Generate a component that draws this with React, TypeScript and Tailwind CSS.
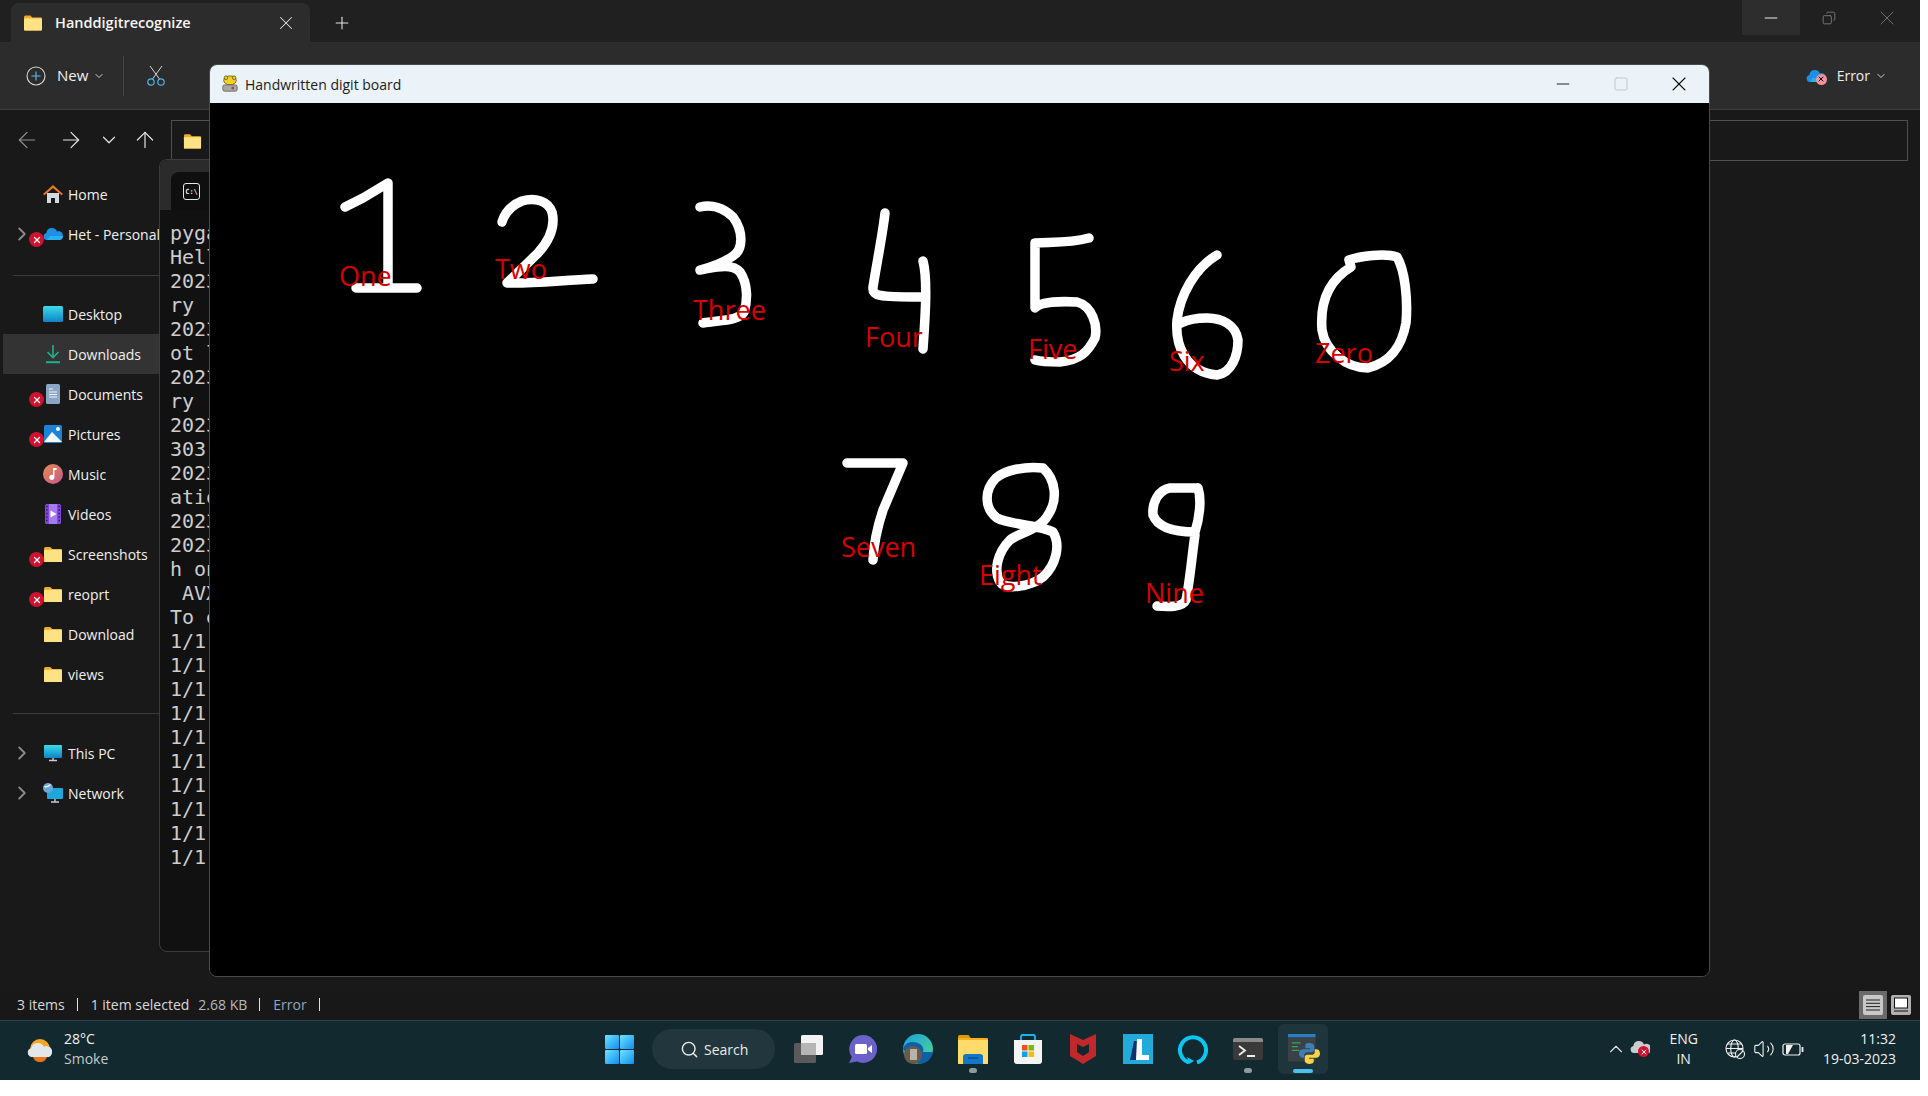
import type { ReactNode } from 'react';
import {
  ArrowLeft,
  ArrowRight,
  ArrowUp,
  ChevronDown,
  ChevronRight,
  ChevronUp,
  Copy,
  Minus,
  Plus,
  Search,
  Square,
  Volume2,
  X
} from 'lucide-react';

function FolderIcon({ className = 'w-5 h-5' }: { className?: string }) {
  return (
    <svg viewBox="0 0 20 18" className={className}>
      <path d="M1 3.500A1.500 1.500 0 0 1 2.500 2h5l2 2.500H1z" fill="#f2a826" />
      <rect x="1" y="4" width="18" height="13" rx="1" fill="#f2b93b" />
      <rect x="1" y="5" width="18" height="12" rx="1" fill="#ffe283" />
    </svg>
  );
}

function ErrorBadge() {
  return (
    <span className="absolute left-[29px] top-[18px] flex h-[15px] w-[15px] items-center justify-center rounded-full bg-[#d2112f]">
      <X className="h-[10px] w-[10px] text-white" strokeWidth={3} />
    </span>
  );
}

const HomeIcon = (
  <svg viewBox="0 0 20 20" className="h-5 w-5">
    <path d="M4 9h12v10H12v-5H8v5H4z" fill="#d5d9de" />
    <path d="M10 1 20 10l-1.500 1.200L10 4 1.500 11.200 0 10z" fill="#e9752a" />
  </svg>
);

const OneDriveIcon = (
  <svg viewBox="0 0 20 14" className="h-[14px] w-5">
    <path d="M4 13a3.600 3.600 0 0 1-.6-7.100A5.500 5.500 0 0 1 14 4.400 4.300 4.300 0 0 1 19.800 9 4 4 0 0 1 16 13z" fill="#1d90e4" />
    <path d="M4 13h12a4 4 0 0 0 3.800-4H7z" fill="#2ab0f0" />
  </svg>
);

const DesktopIcon = (
  <svg viewBox="0 0 20 16" className="h-4 w-5">
    <defs>
      <linearGradient id="desk" x1="0" y1="0" x2="0" y2="1">
        <stop offset="0" stopColor="#3bdbe6" />
        <stop offset="1" stopColor="#0f83c9" />
      </linearGradient>
    </defs>
    <rect width="20" height="16" rx="1.500" fill="url(#desk)" />
  </svg>
);

const DownloadsIcon = (
  <svg viewBox="0 0 20 20" className="h-5 w-5" fill="none" stroke="#22b08c" strokeWidth="1.600">
    <path d="M10 1v12M4.500 8 10 13.500 15.500 8" />
    <path d="M3 18.200h14" strokeWidth="2" />
  </svg>
);

const DocumentsIcon = (
  <svg viewBox="0 0 20 20" className="h-5 w-5">
    <rect x="3" y="0" width="14" height="20" rx="1.500" fill="#8aa6c4" />
    <path d="M6 5h4M6 8h8M6 10.500h8M6 13h8" stroke="#eef3f8" strokeWidth="1.200" />
  </svg>
);

const PicturesIcon = (
  <svg viewBox="0 0 20 20" className="h-5 w-5">
    <rect x="1" y="1" width="18" height="18" rx="1.500" fill="#1a83d8" />
    <path d="M1 18 9 8l10 10z" fill="#f4f8fb" />
    <circle cx="15" cy="5" r="2" fill="#f4f8fb" />
  </svg>
);

const MusicIcon = (
  <svg viewBox="0 0 20 20" className="h-5 w-5">
    <defs>
      <linearGradient id="music" x1="0" y1="0" x2="1" y2="1">
        <stop offset="0" stopColor="#e98a4e" />
        <stop offset="1" stopColor="#c25a8c" />
      </linearGradient>
    </defs>
    <circle cx="10" cy="10" r="10" fill="url(#music)" />
    <path d="M10 4h3.600v2H11.400v7.200A2.600 2.600 0 1 1 10 11z" fill="#fff" />
  </svg>
);

const VideosIcon = (
  <svg viewBox="0 0 20 20" className="h-5 w-5">
    <rect x="2" y="0" width="16" height="20" rx="1.500" fill="#8247d8" />
    <path d="M6 0h8v20H6z" fill="#a77bf0" />
    <path d="M7.500 6.500v7l6-3.500z" fill="#fff" />
    <path d="M3 2.500h1.600M3 6h1.600M3 9.500h1.600M3 13h1.600M3 16.500h1.600M15.400 2.500H17M15.400 6H17M15.400 9.500H17M15.400 13H17M15.400 16.500H17" stroke="#39196f" strokeWidth="1.600" />
  </svg>
);

const ThisPcIcon = (
  <svg viewBox="0 0 20 18" className="h-[18px] w-5">
    <defs>
      <linearGradient id="pc" x1="0" y1="0" x2="0" y2="1">
        <stop offset="0" stopColor="#3bdbe6" />
        <stop offset="1" stopColor="#0f83c9" />
      </linearGradient>
    </defs>
    <rect x="1" y="1" width="18" height="13" rx="1" fill="url(#pc)" />
    <path d="M6 16.500h8M10 14v2.500" stroke="#c6ccd2" strokeWidth="1.400" />
  </svg>
);

const NetworkIcon = (
  <svg viewBox="0 0 20 20" className="h-5 w-5">
    <rect x="4" y="5" width="16" height="11" rx="1" fill="#1ea7d8" />
    <path d="M8 19h8M12 16v3" stroke="#c6ccd2" strokeWidth="1.400" />
    <circle cx="5" cy="5" r="5" fill="#6ba6d8" />
    <path d="M1.500 3.500c2.500 1 4 0 6-2" stroke="#e8f2fa" strokeWidth="1.400" fill="none" />
  </svg>
);

type NavItem = {
  label: string;
  icon: ReactNode;
  expand?: boolean;
  error?: boolean;
  active?: boolean;
};

const pinnedItems: NavItem[] = [
  { label: 'Home', icon: HomeIcon },
  { label: 'Het - Personal', icon: OneDriveIcon, expand: true, error: true }
];

const quickItems: NavItem[] = [
  { label: 'Desktop', icon: DesktopIcon },
  { label: 'Downloads', icon: DownloadsIcon, active: true },
  { label: 'Documents', icon: DocumentsIcon, error: true },
  { label: 'Pictures', icon: PicturesIcon, error: true },
  { label: 'Music', icon: MusicIcon },
  { label: 'Videos', icon: VideosIcon },
  { label: 'Screenshots', icon: <FolderIcon />, error: true },
  { label: 'reoprt', icon: <FolderIcon />, error: true },
  { label: 'Download', icon: <FolderIcon /> },
  { label: 'views', icon: <FolderIcon /> }
];

const deviceItems: NavItem[] = [
  { label: 'This PC', icon: ThisPcIcon, expand: true },
  { label: 'Network', icon: NetworkIcon, expand: true }
];

function NavRow({ item }: { item: NavItem }) {
  return (
    <div className={`relative ml-[3px] flex h-10 items-center ${item.active ? 'bg-[#333333]' : ''}`}>
      {item.expand ? <ChevronRight className="absolute left-[8px] h-[22px] w-[22px] text-[#8a8a8a]" strokeWidth={2} /> : null}
      <span className="absolute left-[40px] flex w-5 justify-center">{item.icon}</span>
      {item.error ? <span className="absolute left-[-3px] top-0 h-10 w-10"><ErrorBadge /></span> : null}
      <span className="absolute left-[65px] whitespace-nowrap text-[14px] text-[#f0f0f0]">{item.label}</span>
    </div>
  );
}

const terminalLines = [
  'pygame 2.1.3', 'Hello from', '2023-03-19', 'ry', '2023-03-19', 'ot load', '2023-03-19', 'ry', '2023-03-19',
  '303]', '2023-03-19', 'ation', '2023-03-19', '2023-03-19', 'h one', ' AVX2', 'To enable',
  '1/1', '1/1', '1/1', '1/1', '1/1', '1/1', '1/1', '1/1', '1/1', '1/1'
];

const strokes = [
  'M345 207 363 198 388 183V287M356 288H417',
  'M502 222C505 212 512 205 522 201 535 197 548 201 552 212 556 228 547 243 538 253L507 283C530 284 565 280 593 279',
  'M700 207C712 204 724 208 733 217 744 232 743 250 733 256 722 264 708 268 700 270 712 268 732 262 740 272 749 285 747 303 744 312 738 321 722 320 703 323',
  'M885 213C883 232 877 262 873 287 872 296 878 297 920 297M923 261C928 280 925 320 923 349',
  'M1089 238C1070 243 1055 242 1035 243V308C1040 302 1060 301 1077 302 1092 306 1098 325 1095 338 1088 352 1080 360 1060 362 1050 362 1042 362 1035 360',
  'M1217 255C1195 268 1180 295 1177 320 1175 345 1185 372 1217 375 1232 373 1238 355 1238 340 1236 325 1222 318 1207 318 1195 318 1187 320 1181 323',
  'M1351 267 1349 260C1360 256 1385 253 1397 257 1405 270 1408 300 1406 323 1402 345 1392 362 1368 368 1345 368 1325 350 1322 330 1320 305 1326 282 1351 267Z',
  'M847 463H903L883 510C878 525 874 540 873 560',
  'M1043 468C1025 466 1005 470 996 478 984 490 984 508 997 518 1010 525 1040 525 1053 532 1061 545 1056 565 1043 577 1030 587 1005 590 1000 582 993 570 998 552 1010 540 1020 532 1040 530 1048 515 1058 500 1056 480 1043 468',
  'M1198 488H1170C1158 490 1152 503 1153 515 1158 528 1175 532 1195 532 1199 520 1202 500 1198 488M1195 535C1192 555 1190 580 1186 600 1183 607 1170 607 1157 606'
];

const labels = [
  { text: 'One', className: 'left-[129px] top-[157px]' },
  { text: 'Two', className: 'left-[285px] top-[150px]' },
  { text: 'Three', className: 'left-[483px] top-[191px]' },
  { text: 'Four', className: 'left-[655px] top-[218px]' },
  { text: 'Five', className: 'left-[818px] top-[230px]' },
  { text: 'Six', className: 'left-[959px] top-[242px]' },
  { text: 'Zero', className: 'left-[1105px] top-[234px]' },
  { text: 'Seven', className: 'left-[631px] top-[428px]' },
  { text: 'Eight', className: 'left-[769px] top-[456px]' },
  { text: 'Nine', className: 'left-[935px] top-[474px]' }
];

const taskbarIcons: { key: string; icon: ReactNode; dot?: boolean }[] = [
  {
    key: 'taskview',
    icon: (
      <svg viewBox="0 0 30 30" className="h-[30px] w-[30px]">
        <rect x="1" y="9" width="22" height="20" rx="1.500" fill="#5a5a5a" />
        <rect x="8" y="1" width="22" height="20" rx="1.500" fill="#f2f2f2" />
        <rect x="8" y="9" width="15" height="12" fill="#b5b5b5" />
      </svg>
    )
  },
  {
    key: 'chat',
    icon: (
      <svg viewBox="0 0 30 30" className="h-[30px] w-[30px]">
        <path d="M15 1a14 14 0 1 1-6 26.600L1 29l2.800-6A14 14 0 0 1 15 1z" fill="#6a62c8" />
        <rect x="7" y="10" width="12" height="10" rx="1.500" fill="#fff" />
        <path d="m20 14 4-3v8l-4-3z" fill="#fff" />
      </svg>
    )
  },
  {
    key: 'edge',
    icon: (
      <svg viewBox="0 0 30 30" className="h-[30px] w-[30px]">
        <defs>
          <linearGradient id="edge" x1="0" y1="0" x2="1" y2="1">
            <stop offset="0" stopColor="#1b9fe0" />
            <stop offset="1" stopColor="#4fd98a" />
          </linearGradient>
        </defs>
        <circle cx="15" cy="15" r="15" fill="url(#edge)" />
        <path d="M0 15C2 8 10 6 17 10c3 2 4 5 3 8h10c-1 7-7 12-15 12z" fill="#0f5fa8" />
        <circle cx="10" cy="21" r="9" fill="#6b5a4a" />
        <rect x="7" y="15" width="7" height="11" fill="#b8b2ac" />
      </svg>
    )
  },
  {
    key: 'explorer',
    dot: true,
    icon: (
      <svg viewBox="0 0 30 30" className="h-[30px] w-[30px]">
        <path d="M0 2.500A1.500 1.500 0 0 1 1.500 1h9l3 4H0z" fill="#d59a0e" />
        <rect y="4" width="30" height="26" rx="1" fill="#f5b21d" />
        <rect y="6" width="30" height="24" rx="1" fill="#ffdb6c" />
        <path d="M5 30v-7a3 3 0 0 1 3-3h14a3 3 0 0 1 3 3v7z" fill="#1477c6" />
        <path d="M10 24h10" stroke="#0b4f8a" strokeWidth="1.500" />
      </svg>
    )
  },
  {
    key: 'store',
    icon: (
      <svg viewBox="0 0 30 30" className="h-[30px] w-[30px]">
        <path d="M8 7V2.500A1.500 1.500 0 0 1 9.500 1h11A1.500 1.500 0 0 1 22 2.500V7" fill="none" stroke="#19b5f1" strokeWidth="1.800" />
        <path d="M1 6h28v21a3 3 0 0 1-3 3H4a3 3 0 0 1-3-3z" fill="#f4f4f4" />
        <rect x="9" y="11" width="5.500" height="5.500" fill="#f25022" />
        <rect x="15.500" y="11" width="5.500" height="5.500" fill="#7fba00" />
        <rect x="9" y="17.500" width="5.500" height="5.500" fill="#00a4ef" />
        <rect x="15.500" y="17.500" width="5.500" height="5.500" fill="#ffb900" />
      </svg>
    )
  },
  {
    key: 'mcafee',
    icon: (
      <svg viewBox="0 0 30 30" className="h-[30px] w-[30px]">
        <path d="M2 0 15 6 28 0v22L15 30 2 22z" fill="#c1282a" />
        <path d="M9 10v8l6 4 6-4v-8l-6 3z" fill="#10272d" />
      </svg>
    )
  },
  {
    key: 'lens',
    icon: (
      <svg viewBox="0 0 30 30" className="h-[30px] w-[30px]">
        <rect width="30" height="30" fill="#22aad8" />
        <path d="M7 26 11 7h4v19z" fill="#10306e" />
        <path d="M14 5h5v16h7v5H13z" fill="#fff" />
      </svg>
    )
  },
  {
    key: 'alexa',
    icon: (
      <svg viewBox="0 0 30 30" className="h-[30px] w-[30px]">
        <path d="M11 28.500a13 13 0 1 1 8 0" fill="none" stroke="#0cc5f0" strokeWidth="4" />
        <path d="m9 23 2 7 5-3z" fill="#0cc5f0" />
      </svg>
    )
  },
  {
    key: 'terminal',
    dot: true,
    icon: (
      <svg viewBox="0 0 30 26" className="h-[26px] w-[30px]">
        <rect width="30" height="22" y="2" rx="2" fill="#3a3a3a" />
        <path d="M0 4a2 2 0 0 1 2-2h26a2 2 0 0 1 2 2v2H0z" fill="#8a8a8a" />
        <path d="m6 10 6 4.500-6 4.500" stroke="#eee" strokeWidth="1.800" fill="none" />
        <path d="M14 20h8" stroke="#eee" strokeWidth="2" />
      </svg>
    )
  }
];

function PythonLogo({ className }: { className: string }) {
  return (
    <svg viewBox="0 0 20 20" className={className}>
      <path d="M10 0C6 0 6 1.800 6 3v2h4.500v1H3.500C1.500 6 0 7.500 0 10s1.500 4 3.500 4H5v-2.500C5 9.800 6.300 8.800 8 8.800h4c1.500 0 2.500-1 2.500-2.500V3C14.500 1 12.500 0 10 0z" fill="#3c7fb5" />
      <path d="M10 20c4 0 4-1.800 4-3v-2H9.500v-1h7c2 0 3.500-1.500 3.500-4s-1.500-4-3.500-4H15v2.500c0 1.700-1.300 2.700-3 2.700H8c-1.500 0-2.500 1-2.500 2.500V17c0 2 2 3 4.500 3z" fill="#f7d347" />
    </svg>
  );
}

export default function App() {
  return (
    <div className="relative h-[1096px] w-[1928px] overflow-hidden bg-white font-['Open_Sans',sans-serif] text-[14px]">
      <div className="flex h-[1080px] w-[1920px] flex-col">
        {/* tab strip */}
        <div className="flex h-[42px] items-start bg-[#202020]">
          <div className="ml-[11px] mt-[3px] flex h-[39px] w-[299px] items-center rounded-t-lg bg-[#2c2c2c] pl-[12px] pr-[13px]">
            <FolderIcon className="h-[19px] w-[20px]" />
            <span className="ml-[12px] text-[14.500px] font-semibold text-[#f4f4f4]">Handdigitrecognize</span>
            <X className="ml-auto h-[22px] w-[22px] text-[#e0e0e0]" strokeWidth={1.100} />
          </div>
          <Plus className="ml-[22px] mt-[13px] h-[20px] w-[20px] text-[#e4e4e4]" strokeWidth={1.300} />
          <div className="ml-auto mr-[4px] flex">
            <span className="flex h-[35px] w-[58px] items-center justify-center bg-[#2d2d2d]">
              <Minus className="h-[20px] w-[20px] text-white" strokeWidth={1.100} />
            </span>
            <span className="flex h-[35px] w-[58px] items-center justify-center">
              <Copy className="h-[14px] w-[14px] -scale-x-100 text-[#7a7a7a]" strokeWidth={1.600} />
            </span>
            <span className="flex h-[35px] w-[58px] items-center justify-center">
              <X className="h-[24px] w-[24px] text-[#6e6e6e]" strokeWidth={1} />
            </span>
          </div>
        </div>

        {/* command bar */}
        <div className="flex h-[68px] items-center border-b border-[#3d3d3d] bg-[#2c2c2c] pl-[26px]">
          <svg viewBox="0 0 20 20" className="h-[20px] w-[20px]" fill="none">
            <circle cx="10" cy="10" r="9" stroke="#d4d4d4" strokeWidth="1.100" />
            <path d="M10 5.500v9M5.500 10h9" stroke="#5cc0f0" strokeWidth="1.100" />
          </svg>
          <span className="ml-[11px] text-[15px] text-[#efefef]">New</span>
          <ChevronDown className="ml-[5px] h-[12px] w-[12px] text-[#cfcfcf]" />
          <span className="ml-[18px] h-[40px] w-px bg-[#444444]" />
          <svg viewBox="0 0 18 20" className="ml-[23px] h-[20px] w-[18px]" fill="none">
            <path d="M3 0 12.500 13M15 0 5.500 13" stroke="#d4d4d4" strokeWidth="1" />
            <circle cx="4" cy="16" r="3.200" stroke="#4cb4ee" strokeWidth="1.200" />
            <circle cx="14" cy="16" r="3.200" stroke="#4cb4ee" strokeWidth="1.200" />
          </svg>
          <div className="ml-auto mr-[33px] flex items-center">
            <span className="relative">
              {OneDriveIcon}
              <span className="absolute left-[10px] top-[5px] flex h-[11px] w-[11px] items-center justify-center rounded-full bg-[#f6919b]">
                <X className="h-[8px] w-[8px] text-black" strokeWidth={3} />
              </span>
            </span>
            <span className="ml-[11px] text-[#efefef]">Error</span>
            <ChevronDown className="ml-[5px] h-[12px] w-[12px] text-[#cfcfcf]" />
          </div>
        </div>

        {/* address bar */}
        <div className="flex h-[62px] items-start bg-[#191919] pl-[14px] pr-[12px] pt-[10px]">
          <div className="flex h-[40px] items-center">
            <ArrowLeft className="h-[26px] w-[26px] text-[#8f8f8f]" strokeWidth={1.100} />
            <ArrowRight className="ml-[18px] h-[26px] w-[26px] text-[#e6e6e6]" strokeWidth={1.100} />
            <ChevronDown className="ml-[14px] h-[22px] w-[22px] text-[#e6e6e6]" strokeWidth={1.300} />
            <ArrowUp className="ml-[12px] h-[26px] w-[26px] text-[#e6e6e6]" strokeWidth={1.100} />
          </div>
          <div className="ml-[13px] flex h-[41px] flex-1 items-center border border-[#4f4f4f] pl-[11px]">
            <FolderIcon className="h-[18px] w-[19px]" />
          </div>
        </div>

        {/* body */}
        <div className="flex-1 bg-[#191919]">
          <div className="w-[160px] pt-[2px]">
            {pinnedItems.map((item) => (
              <NavRow key={item.label} item={item} />
            ))}
            <div className="ml-[13px] mt-[21px] mb-[18px] h-px bg-[#3a3a3a]" />
            {quickItems.map((item) => (
              <NavRow key={item.label} item={item} />
            ))}
            <div className="ml-[13px] mt-[19px] mb-[19px] h-px bg-[#3a3a3a]" />
            {deviceItems.map((item) => (
              <NavRow key={item.label} item={item} />
            ))}
          </div>
        </div>

        {/* status bar */}
        <div className="flex h-[28px] items-center bg-[#181818] pb-[3px] pl-[17px] pr-[9px] text-[14px] text-[#d8d8d8]">
          <span>3 items</span>
          <span className="ml-[12px] h-[13px] w-px bg-[#e0e0e0]" />
          <span className="ml-[13px]">1 item selected</span>
          <span className="ml-[9px] text-[#b8b8b8]">2.68 KB</span>
          <span className="ml-[12px] h-[13px] w-px bg-[#e0e0e0]" />
          <span className="ml-[13px] text-[#8ea6bd]">Error</span>
          <span className="ml-[12px] h-[13px] w-px bg-[#e0e0e0]" />
          <div className="ml-auto flex items-center">
            <span className="flex h-[28px] w-[28px] items-center justify-center bg-[#6a6a6a]">
              <svg viewBox="0 0 20 20" className="h-[20px] w-[20px]">
                <rect width="20" height="20" rx="2" fill="#c8c8c8" />
                <path d="M3 5h14M3 8.300h14M3 11.600h14M3 15h14" stroke="#202020" />
              </svg>
            </span>
            <svg viewBox="0 0 20 20" className="ml-[4px] h-[20px] w-[20px]">
              <rect width="20" height="20" rx="2" fill="#b0b0b0" />
              <rect x="3.500" y="3" width="13" height="10" fill="#fff" stroke="#111" />
              <path d="M3 16h14" stroke="#111" />
            </svg>
          </div>
        </div>

        {/* taskbar */}
        <div className="flex h-[60px] items-center border-t border-[#2f4248] bg-[#12292f] pb-[3px]">
          <div className="flex w-[605px] items-center pl-[25px]">
            <svg viewBox="0 0 30 26" className="h-[26px] w-[30px]">
              <path d="M5 13a10 10 0 0 1 20 0z" fill="#f5a623" />
              <path d="M8 17h14a7 7 0 0 1-14 4z" fill="#e8741c" />
              <path d="M7 21a4.500 4.500 0 0 1-1-8.800 7 7 0 0 1 13-1.500 5.500 5.500 0 0 1 5 10.300z" fill="#e4e7ea" />
            </svg>
            <div className="ml-[9px] flex flex-col leading-[20px]">
              <span className="text-[#f2f2f2]">28°C</span>
              <span className="text-[#c4c9cb]">Smoke</span>
            </div>
          </div>
          <svg viewBox="0 0 29 29" className="h-[29px] w-[29px]">
            <defs>
              <linearGradient id="start" x1="0" y1="0" x2="1" y2="1">
                <stop offset="0" stopColor="#6fe3ff" />
                <stop offset="1" stopColor="#0f8ff0" />
              </linearGradient>
            </defs>
            <rect width="14" height="14" rx="1" fill="url(#start)" />
            <rect x="15" width="14" height="14" rx="1" fill="url(#start)" />
            <rect y="15" width="14" height="14" rx="1" fill="url(#start)" />
            <rect x="15" y="15" width="14" height="14" rx="1" fill="url(#start)" />
          </svg>
          <div className="ml-[18px] flex h-[40px] w-[123px] items-center rounded-full bg-[#21373d] pl-[28px] text-[#eaeaea]">
            <Search className="h-[19px] w-[19px]" strokeWidth={1.800} />
            <span className="ml-[5px]">Search</span>
          </div>
          <div className="ml-[18px] flex items-center gap-[25px]">
            {taskbarIcons.map((item) => (
              <div key={item.key} className="relative flex h-[30px] w-[30px] items-center justify-center">
                {item.icon}
                {item.dot ? <span className="absolute -bottom-[9px] h-[5px] w-[8px] rounded-full bg-[#8d9a9e]" /> : null}
              </div>
            ))}
          </div>
          <div className="relative ml-[15px] flex h-[50px] w-[50px] items-center justify-center rounded-md bg-[#1e353b]">
            <svg viewBox="0 0 24 24" className="h-[30px] w-[30px]">
              <rect x="0" y="0" width="22" height="22" fill="#3a4247" />
              <rect x="0" y="0" width="22" height="2.500" fill="#2a7fc4" />
              <path d="M3 7h7M3 10h5M3 13h6" stroke="#3fa05a" strokeWidth="1" />
            </svg>
            <PythonLogo className="absolute left-[21px] top-[19px] h-[21px] w-[21px]" />
            <span className="absolute bottom-[1px] left-[15px] h-[4px] w-[20px] rounded-full bg-[#4cc2f1]" />
          </div>
          <div className="ml-auto flex items-center pr-[24px] text-[14px] text-[#f0f0f0]">
            <ChevronUp className="h-[22px] w-[22px] text-[#e0e0e0]" strokeWidth={1.200} />
            <span className="relative ml-[3px] h-[18px] w-[20px]">
              <svg viewBox="0 0 20 14" className="h-[14px] w-5">
                <path d="M4 13a3.600 3.600 0 0 1-.6-7.100A5.500 5.500 0 0 1 14 4.400 4.300 4.300 0 0 1 19 13z" fill="#c8cdd0" />
              </svg>
              <span className="absolute left-[8px] top-[6px] flex h-[11px] w-[11px] items-center justify-center rounded-full bg-[#d2112f]">
                <X className="h-[8px] w-[8px] text-white" strokeWidth={3} />
              </span>
            </span>
            <div className="ml-[19px] flex flex-col items-center leading-[20px]">
              <span>ENG</span>
              <span>IN</span>
            </div>
            <svg viewBox="0 0 20 20" className="ml-[27px] h-[20px] w-[20px]" fill="none" stroke="#f0f0f0" strokeWidth="1.100">
              <circle cx="9.500" cy="9.500" r="8.500" />
              <ellipse cx="9.500" cy="9.500" rx="3.800" ry="8.500" />
              <path d="M1 9.500h17M2.500 5h14M2.500 14h14" />
              <circle cx="15" cy="15" r="4.500" fill="#12292f" />
              <path d="m12 18 6-6" />
            </svg>
            <Volume2 className="ml-[8px] h-[22px] w-[22px]" strokeWidth={1.200} />
            <svg viewBox="0 0 22 16" className="ml-[7px] h-[16px] w-[22px]" fill="none" stroke="#f0f0f0" strokeWidth="1.200">
              <rect x="1" y="3" width="17" height="11" rx="2" />
              <path d="M20.500 6v5" strokeWidth="1.800" />
              <path d="M4 4h7L6 13H4z" fill="#f0f0f0" stroke="none" />
            </svg>
            <div className="ml-[19px] flex flex-col items-end leading-[20px]">
              <span>11:32</span>
              <span>19-03-2023</span>
            </div>
          </div>
        </div>
      </div>

      {/* terminal window behind the pygame board */}
      <div className="absolute left-[159px] top-[159px] h-[793px] w-[500px] rounded-lg border border-[#3c3c3c] bg-[#111111]">
        <div className="flex h-[50px] items-end rounded-t-lg bg-[#2b2b2b] pl-[11px]">
          <div className="flex h-[38px] flex-1 items-center rounded-tl-lg bg-[#0f0f0f] pl-[12px]">
            <span className="flex h-[17px] w-[17px] items-center justify-center rounded-[3px] border border-[#e6e6e6] pt-[3px] font-['DejaVu_Sans_Mono',monospace] text-[7px] font-bold leading-none text-[#e6e6e6]">
              C:\
            </span>
          </div>
        </div>
        <div className="whitespace-pre pl-[10px] pt-[11px] font-['DejaVu_Sans_Mono',monospace] text-[20px] leading-[24px] text-[#cccccc]">
          {terminalLines.map((line, index) => (
            <div key={index}>{line}</div>
          ))}
        </div>
      </div>

      {/* pygame window */}
      <div className="absolute left-[209px] top-[64px] flex h-[913px] w-[1501px] flex-col overflow-hidden rounded-lg border border-[#4a4a4a]">
        <div className="flex h-[38px] items-center bg-[#ebf3f8] pl-[11px]">
          <svg viewBox="0 0 20 20" className="h-[20px] w-[18px]">
            <ellipse cx="10" cy="6" rx="7" ry="5" fill="#f3d21f" stroke="#4b4420" strokeWidth="0.800" />
            <circle cx="5.500" cy="3" r="2" fill="#f3d21f" stroke="#4b4420" strokeWidth="0.800" />
            <circle cx="14.500" cy="3" r="2" fill="#f3d21f" stroke="#4b4420" strokeWidth="0.800" />
            <rect x="2" y="11" width="16" height="7" rx="2" fill="#a9a9a1" stroke="#55554f" strokeWidth="0.800" />
            <circle cx="13" cy="14.500" r="1.500" fill="#b03a3a" />
          </svg>
          <span className="ml-[6px] text-[14px] text-[#1c1c1c]">Handwritten digit board</span>
          <div className="ml-auto flex pr-px">
            <span className="flex h-[38px] w-[58px] items-center justify-center">
              <Minus className="h-[20px] w-[20px] text-[#111111]" strokeWidth={1.100} />
            </span>
            <span className="flex h-[38px] w-[58px] items-center justify-center">
              <Square className="h-[16px] w-[16px] text-[#bcc2c6]" strokeWidth={1.300} />
            </span>
            <span className="flex h-[38px] w-[58px] items-center justify-center">
              <X className="h-[24px] w-[24px] text-[#111111]" strokeWidth={1.100} />
            </span>
          </div>
        </div>
        <div className="relative flex-1 bg-black">
          <svg viewBox="210 103 1499 873" className="absolute inset-0 h-full w-full" fill="none" stroke="#ffffff" strokeWidth="9.500" strokeLinecap="round" strokeLinejoin="round">
            {strokes.map((d) => (
              <path key={d} d={d} />
            ))}
          </svg>
          {labels.map((label) => (
            <span key={label.text} className={`absolute text-[27px] leading-[32px] text-[#d90000] ${label.className}`}>
              {label.text}
            </span>
          ))}
        </div>
      </div>
    </div>
  );
}
